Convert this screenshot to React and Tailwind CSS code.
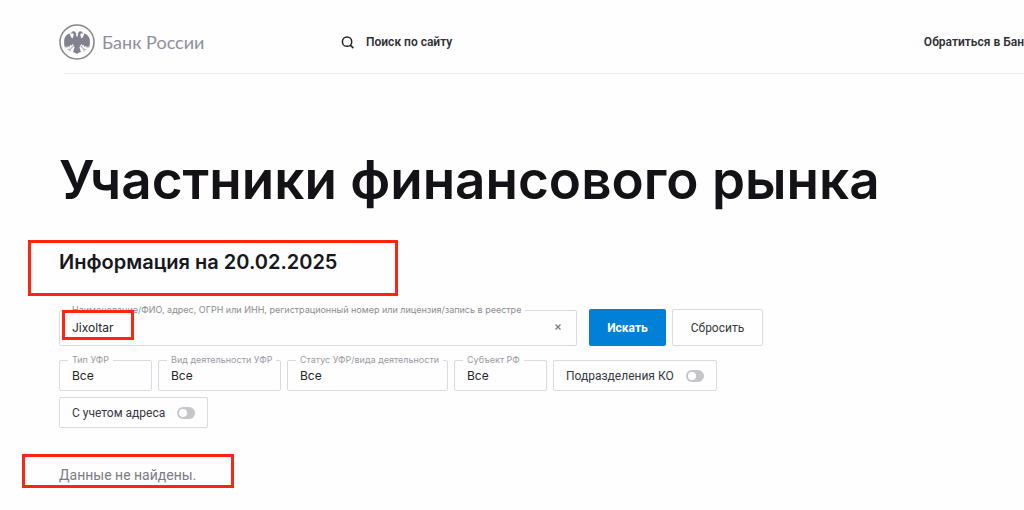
import React, { useState } from "react";

const filters = [
  { id: "type", label: "Тип УФР", width: "w-[93px]" },
  { id: "activity", label: "Вид деятельности УФР", width: "w-[123px]" },
  { id: "status", label: "Статус УФР/вида деятельности", width: "w-[161px]" },
  { id: "region", label: "Субъект РФ", width: "w-[93px]" },
];

function Emblem() {
  return (
    <svg className="h-9 w-9 shrink-0" viewBox="0 0 36 36" fill="none" aria-hidden="true">
      <circle cx="18" cy="18" r="17" stroke="#85848f" strokeWidth="1.5" />
      <g fill="#82818f">
        {/* wings */}
        <path d="M10.8 9.6 C7.8 10.4 5.8 12.6 5.3 15.4 C4.9 18.4 5.1 21.4 6 24 L7 22 L7.9 24.2 L9 21.8 L10.2 23.2 L11.4 20.8 L12.6 21.6 L14 19.4 L14 14.6 L12.2 13.6 L11.4 11.6 Z" />
        <path d="M25.2 9.6 C28.2 10.4 30.2 12.6 30.7 15.4 C31.1 18.4 30.9 21.4 30 24 L29 22 L28.1 24.2 L27 21.8 L25.8 23.2 L24.6 20.8 L23.4 21.6 L22 19.4 L22 14.6 L23.8 13.6 L24.6 11.6 Z" />
        {/* heads and body */}
        <path d="M17.3 12.4 L17 9 L15.4 7.2 L13.2 7.4 L11.6 9.8 L13.8 9.3 L14.8 10.8 L13.6 14.4 L13.6 19.8 L15.6 23.4 L14 28 L16.2 28.8 L18 30 L19.8 28.8 L22 28 L20.4 23.4 L22.4 19.8 L22.4 14.4 L21.2 10.8 L22.2 9.3 L24.4 9.8 L22.8 7.4 L20.6 7.2 L19 9 L18.7 12.4 Z" />
      </g>
      <path
        d="M14.2 22 L11.4 25.2 L8.6 25.6 M11.4 25.2 L10.8 27.6 M21.8 22 L24.6 25.2 L27.4 25.6 M24.6 25.2 L25.2 27.6"
        stroke="#b5b4be"
        strokeWidth="1.2"
      />
    </svg>
  );
}

function Toggle({ id, label, checked, onChange }) {
  return (
    <label
      htmlFor={id}
      className="mt-[5px] flex h-[31px] cursor-pointer items-center gap-3 rounded-xs border border-[#d9d9df] px-3 text-xs text-[#38383e] whitespace-nowrap"
    >
      {label}
      <input id={id} type="checkbox" checked={checked} onChange={onChange} className="peer sr-only" />
      <span className="flex h-3 w-[18px] items-center rounded-full bg-[#c6c6ca] p-0.5 peer-checked:justify-end peer-checked:bg-[#0080d6]">
        <span className="h-2 w-2 rounded-full bg-white" />
      </span>
    </label>
  );
}

export default function App() {
  const [query, setQuery] = useState("Jixoltar");
  const [branches, setBranches] = useState(false);
  const [withAddress, setWithAddress] = useState(false);

  const reset = () => {
    setQuery("");
    setBranches(false);
    setWithAddress(false);
  };

  return (
    <div className="min-h-screen overflow-hidden bg-[#fefefe] pl-[59px] font-['Roboto','Liberation_Sans',sans-serif] text-[#17171c]">
      <header className="ml-[5px] border-b border-[#ececf0] pt-6 pb-[13px]">
        <div className="-ml-[5px] flex h-9 items-center text-xs font-semibold text-[#303036]">
          <a href="#" className="flex w-[282px] items-center gap-[7px] font-['Lato','Open_Sans',sans-serif] text-lg font-normal text-[#8f8e9b]">
            <Emblem />
            Банк России
          </a>
          <a href="#" className="flex items-center gap-3">
            <svg className="h-[13px] w-[13px]" viewBox="0 0 12 12" fill="none" stroke="#242429" strokeWidth="1.4" aria-hidden="true">
              <circle cx="5.6" cy="5.2" r="4.3" />
              <path d="M8.6 8.4 L11.4 11.2" />
            </svg>
            Поиск по сайту
          </a>
          <a href="#" className="ml-auto whitespace-nowrap">
            Обратиться в Бан
          </a>
        </div>
      </header>

      <main>
        <h1 className="mt-[74px] font-['Inter',sans-serif] text-[53px] leading-16 font-semibold whitespace-nowrap text-[#141217]">
          Участники финансового рынка
        </h1>

        <div className="relative mt-[38px]">
          <h2 className="font-['Inter',sans-serif] text-xl leading-6 font-semibold">Информация на 20.02.2025</h2>
          <span className="pointer-events-none absolute -top-[10px] -left-[31px] h-14 w-[370px] border-3 border-[#ff2410]" />
        </div>

        <form className="mt-[31px] max-w-[704px]" onSubmit={(e) => e.preventDefault()}>
          <div className="flex items-end gap-1.5">
            <fieldset className="relative mr-1.5 h-[41px] min-w-0 flex-1 rounded-xs border border-[#d9d9df] pl-2">
              <legend className="px-1 font-['Inter',sans-serif] text-[9px] leading-[10px] whitespace-nowrap text-[#8b8b92]">
                <label htmlFor="query">
                  Наименование/ФИО, адрес, ОГРН или ИНН, регистрационный номер или лицензия/запись в реестре
                </label>
              </legend>
              <div className="flex items-center pr-3 pl-1">
                <input
                  id="query"
                  type="text"
                  value={query}
                  onChange={(e) => setQuery(e.target.value)}
                  className="h-6 min-w-0 flex-1 font-['Inter',sans-serif] text-xs text-[#242429] outline-none"
                />
                <button type="button" aria-label="Очистить" onClick={() => setQuery("")} className="cursor-pointer">
                  <svg className="h-3 w-3" viewBox="0 0 12 12" stroke="#77777d" strokeWidth="1.2" aria-hidden="true">
                    <path d="M3.5 3.5 L8.5 8.5 M8.5 3.5 L3.5 8.5" />
                  </svg>
                </button>
              </div>
              <span className="pointer-events-none absolute -top-[5px] left-0.5 h-[30px] w-[72px] border-3 border-[#ff2410]" />
            </fieldset>
            <button type="submit" className="h-[37px] w-[77px] cursor-pointer rounded-xs bg-[#0080d6] text-xs font-bold text-white">
              Искать
            </button>
            <button
              type="button"
              onClick={reset}
              className="h-[37px] w-[91px] cursor-pointer rounded-xs border border-[#d9d9df] text-xs text-[#38383e]"
            >
              Сбросить
            </button>
          </div>

          <div className="mt-[9px] flex flex-wrap gap-x-1.5 gap-y-px">
            {filters.map((f) => (
              <fieldset key={f.id} className={`h-9 min-w-0 rounded-xs border border-[#d9d9df] pl-2 ${f.width}`}>
                <legend className="px-1 font-['Inter',sans-serif] text-[9px] leading-[10px] whitespace-nowrap text-[#9a9aa1]">
                  <label htmlFor={f.id}>{f.label}</label>
                </legend>
                <select id={f.id} className="block h-[22px] w-full appearance-none pl-1 font-['Inter',sans-serif] text-xs text-[#242429] outline-none">
                  <option>Все</option>
                </select>
              </fieldset>
            ))}
            <Toggle
              id="branches"
              label="Подразделения КО"
              checked={branches}
              onChange={(e) => setBranches(e.target.checked)}
            />
            <Toggle
              id="address"
              label="С учетом адреса"
              checked={withAddress}
              onChange={(e) => setWithAddress(e.target.checked)}
            />
          </div>
        </form>

        <div className="relative mt-[37px]">
          <p className="text-sm leading-5 text-[#7c7c80]">Данные не найдены.</p>
          <span className="pointer-events-none absolute -top-[11px] -left-[37px] h-[34px] w-[212px] border-3 border-[#ff2410]" />
        </div>
      </main>
    </div>
  );
}
